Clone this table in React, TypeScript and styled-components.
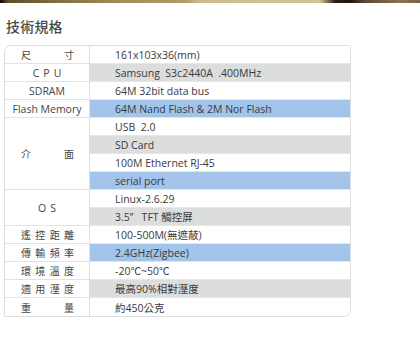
import styled, { createGlobalStyle } from "styled-components"

const GlobalStyle = createGlobalStyle`
    html, body {
        margin: 0;
        padding: 0;
        background: #ffffff;
    }
    body {
        font-family: "Open Sans", "Noto Sans CJK TC", sans-serif;
        color: #3a3a3a;
    }
`

type Row = { value: string; tone?: "gray" | "blue" }
type Group = { label: string; spread?: "justify" | "wide"; rows: Row[] }

const specs: Group[] = [
    { label: "尺寸", spread: "justify", rows: [{ value: "161x103x36(mm)" }] },
    { label: "CPU", spread: "wide", rows: [{ value: "Samsung  S3c2440A  .400MHz", tone: "gray" }] },
    { label: "SDRAM", rows: [{ value: "64M 32bit data bus" }] },
    { label: "Flash Memory", rows: [{ value: "64M Nand Flash & 2M Nor Flash", tone: "blue" }] },
    {
        label: "介面",
        spread: "justify",
        rows: [
            { value: "USB  2.0" },
            { value: "SD Card", tone: "gray" },
            { value: "100M Ethernet RJ-45" },
            { value: "serial port", tone: "blue" },
        ],
    },
    {
        label: "OS",
        spread: "wide",
        rows: [{ value: "Linux-2.6.29" }, { value: "3.5”   TFT 觸控屏", tone: "gray" }],
    },
    { label: "遙控距離", spread: "justify", rows: [{ value: "100-500M(無遮蔽)" }] },
    { label: "傳輸頻率", spread: "justify", rows: [{ value: "2.4GHz(Zigbee)", tone: "blue" }] },
    { label: "環境溫度", spread: "justify", rows: [{ value: "-20℃~50℃" }] },
    { label: "適用溼度", spread: "justify", rows: [{ value: "最高90%相對溼度", tone: "gray" }] },
    { label: "重量", spread: "justify", rows: [{ value: "約450公克" }] },
]

export default function App() {
    return (
        <Page>
            <GlobalStyle />
            <Banner />
            <Title>技術規格</Title>
            <SpecTable>
                {specs.map((group) => (
                    <Group key={group.label}>
                        <Label $span={group.rows.length} $spread={group.spread}>
                            <span>{group.label}</span>
                        </Label>
                        {group.rows.map((row) => (
                            <Value key={row.value} $tone={row.tone}>
                                {row.value}
                            </Value>
                        ))}
                    </Group>
                ))}
            </SpecTable>
            <Rule />
        </Page>
    )
}

const Page = styled.div`
    width: 420px;
    height: 342px;
    overflow: hidden;
`

const Banner = styled.div`
    height: 3px;
    background: linear-gradient(
        90deg,
        #0c0a06 0px,
        #5e4e2c 8px,
        #7c6a3e 50px,
        #a48c55 120px,
        #b09a66 185px,
        #cbbb8e 200px,
        #d2c497 320px,
        #2a2016 335px,
        #1e170f 350px,
        #5c4830 365px,
        #8c7350 400px,
        #7a6244 420px
    );
`

const Title = styled.h2`
    margin: 14px 0 0 6px;
    font-size: 14px;
    line-height: 20px;
    font-weight: 500;
    color: #4a4a4a;
    letter-spacing: 0.2px;
`

const Group = styled.div`
    display: contents;
`

const Label = styled.div<{ $span: number; $spread?: "justify" | "wide" }>`
    grid-column: 1;
    grid-row: span ${(p) => p.$span};
    display: flex;
    align-items: center;
    justify-content: center;
    box-sizing: border-box;
    border-right: 1px solid #dedede;
    border-bottom: 1px solid #e2e2e2;
    padding: ${(p) => (p.$spread === "justify" ? "0 15px 0 16px" : "0")};
    color: #444;
    font-size: ${(p) => (p.$spread === "justify" ? "10px" : "10.5px")};
    letter-spacing: ${(p) => (p.$spread === "wide" ? "4px" : "0")};
    text-indent: ${(p) => (p.$spread === "wide" ? "4px" : "0")};

    span {
        flex: ${(p) => (p.$spread === "justify" ? "1" : "none")};
        text-align: ${(p) => (p.$spread === "justify" ? "justify" : "center")};
        text-align-last: ${(p) => (p.$spread === "justify" ? "justify" : "center")};
        text-justify: inter-character;
    }
`

const Value = styled.div<{ $tone?: "gray" | "blue" }>`
    grid-column: 2;
    display: flex;
    align-items: center;
    box-sizing: border-box;
    padding-left: 25px;
    border-bottom: 1px solid #e6e6e6;
    white-space: pre;
    color: #3a3a3a;
    background: ${(p) =>
        p.$tone === "gray" ? "#dcdddd" : p.$tone === "blue" ? "#a2c4e9" : "#ffffff"};
`

const SpecTable = styled.div`
    margin: 8px 0 0 4px;
    width: 347px;
    box-sizing: border-box;
    border: 1px solid #dedede;
    border-radius: 7px 0 7px 0;
    overflow: hidden;
    display: grid;
    grid-template-columns: 85px 1fr;
    grid-auto-rows: 18px;
    font-size: 10.5px;

    ${Group}:last-child > * {
        border-bottom: none;
    }
`

const Rule = styled.div`
    margin-top: 25px;
    height: 1px;
    background: #efefef;
`
